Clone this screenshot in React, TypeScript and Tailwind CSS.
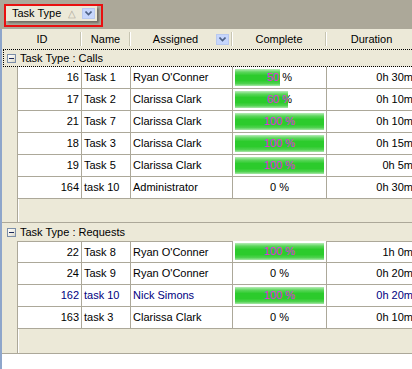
import React from "react";

type Row = { id: number; name: string; who: string; pct: number; dur: string; navy?: boolean };

const calls: Row[] = [
  { id: 16, name: "Task 1", who: "Ryan O'Conner", pct: 50, dur: "0h 30m" },
  { id: 17, name: "Task 2", who: "Clarissa Clark", pct: 60, dur: "0h 10m" },
  { id: 21, name: "Task 7", who: "Clarissa Clark", pct: 100, dur: "0h 10m" },
  { id: 18, name: "Task 3", who: "Clarissa Clark", pct: 100, dur: "0h 15m" },
  { id: 19, name: "Task 5", who: "Clarissa Clark", pct: 100, dur: "0h 5m" },
  { id: 164, name: "task 10", who: "Administrator", pct: 0, dur: "0h 30m" },
];

const requests: Row[] = [
  { id: 22, name: "Task 8", who: "Ryan O'Conner", pct: 100, dur: "1h 0m" },
  { id: 24, name: "Task 9", who: "Ryan O'Conner", pct: 0, dur: "0h 20m" },
  { id: 162, name: "task 10", who: "Nick Simons", pct: 100, dur: "0h 20m", navy: true },
  { id: 163, name: "task 3", who: "Clarissa Clark", pct: 0, dur: "0h 10m" },
];

function DropBtn() {
  return (
    <div className="flex h-[11px] w-[13px] items-center justify-center border border-[#b9c9ef] bg-[#c6d6fc]">
      <svg width="7" height="5" viewBox="0 0 7 5">
        <path d="M0.5 0.5 L3.5 3.5 L6.5 0.5" fill="none" stroke="#4d6185" strokeWidth="1.6" />
      </svg>
    </div>
  );
}

function Sep() {
  return <div className="h-[14px] w-[2px] shrink-0 self-center border-l border-r border-l-[#c7c5b2] border-r-white" />;
}

function MinusBox() {
  return (
    <div className="flex h-[9px] w-[9px] shrink-0 items-center justify-center border border-[#7b8ea8] bg-[linear-gradient(135deg,#ffffff_0%,#f0efe8_50%,#d6d2c2_100%)]">
      <div className="h-[1px] w-[5px] bg-[#1c2a5a]" />
    </div>
  );
}

function Complete({ pct }: { pct: number }) {
  const barW = Math.round((89 * pct) / 100);
  return (
    <div className="relative h-full w-[94px] shrink-0 border-r border-b border-[#aca899] bg-white">
      <div className="absolute inset-0 flex items-center justify-center text-black">{pct} %</div>
      {pct > 0 && (
        <div
          className="absolute left-[2px] top-[2px] h-[17px] overflow-hidden bg-[linear-gradient(to_bottom,#b8ecb8_0%,#5cd65c_18%,#2ccb2c_38%,#2ccb2c_68%,#4fd24f_86%,#a9e6a9_100%)]"
          style={{ width: barW }}
        >
          <div className="absolute left-[-2px] top-[-2px] flex h-[21px] w-[93px] items-center justify-center text-[#e81ee8]">
            {pct} %
          </div>
        </div>
      )}
    </div>
  );
}

function DataRow({ r, top }: { r: Row; top?: boolean }) {
  const color = r.navy ? "text-[#000080]" : "text-black";
  const tb = top ? "border-t" : "";
  return (
    <div className={`flex h-[22px] ${color}`}>
      <div className="w-[15px] shrink-0 bg-[#ece9d8]" />
      <div className={`flex w-[65px] shrink-0 items-center justify-end border-l border-r border-b border-[#aca899] bg-white pr-[2px] ${tb}`}>
        {r.id}
      </div>
      <div className={`flex w-[49px] shrink-0 items-center border-r border-b border-[#aca899] bg-white pl-[2px] ${tb}`}>
        {r.name}
      </div>
      <div className={`flex w-[102px] shrink-0 items-center border-r border-b border-[#aca899] bg-white pl-[2px] ${tb}`}>
        {r.who}
      </div>
      <Complete pct={r.pct} />
      <div className={`flex w-[88px] shrink-0 items-center justify-end border-b border-[#aca899] bg-white pr-[2px] ${tb}`}>
        {r.dur}
      </div>
    </div>
  );
}

function Footer({ h }: { h: "a" | "b" }) {
  return (
    <div className={`flex border-b border-[#aca899] ${h === "a" ? "h-[24px]" : "h-[25px]"}`}>
      <div className="w-[15px] shrink-0" />
      <div className="flex-1 border-l border-[#aca899] shadow-[inset_1px_0_0_#ffffff]" />
    </div>
  );
}

export default function App() {
  return (
    <div className="h-[369px] w-[412px] overflow-hidden bg-white font-['Liberation_Sans',Arial,sans-serif] text-[11px] leading-none text-black">
      {/* group-by area */}
      <div className="h-[29px] bg-[#aca899] pl-[4px] pt-[4px]">
        <div className="h-[23px] w-[99px] border-2 border-[#e81010] bg-[#aca899]">
          <div className="flex h-[15px] w-[91px] items-center bg-[#ece9d8] pl-[6px] shadow-[2px_2px_2px_rgba(0,0,0,0.35)]">
            <span>Task Type</span>
            <span className="ml-[7px] text-[10px] text-[#aca899]">△</span>
            <div className="ml-[6px]">
              <DropBtn />
            </div>
          </div>
        </div>
      </div>

      <div className="h-[340px] w-[414px] border-l-2 border-[#8ea6cb]">
        {/* header */}
        <div className="flex h-[20px] bg-[#ece9d8]">
          <div className="flex w-[80px] shrink-0">
            <div className="flex flex-1 items-center justify-center pl-[2px]">ID</div>
            <Sep />
          </div>
          <div className="flex w-[49px] shrink-0">
            <div className="flex flex-1 items-center justify-center">Name</div>
            <Sep />
          </div>
          <div className="flex w-[102px] shrink-0">
            <div className="flex flex-1 items-center justify-center pl-[4px]">Assigned</div>
            <div className="mr-[2px] self-center">
              <DropBtn />
            </div>
            <Sep />
          </div>
          <div className="flex w-[94px] shrink-0">
            <div className="flex flex-1 items-center justify-center">Complete</div>
            <Sep />
          </div>
          <div className="flex w-[89px] shrink-0 items-center justify-center">Duration</div>
        </div>

        <div className="bg-[#ece9d8]">
          {/* group 1 */}
          <div className="ml-[1px] flex h-[18px] items-center border border-dotted border-black pl-[3px]">
            <MinusBox />
            <span className="ml-[4px]">Task Type : Calls</span>
          </div>
          {calls.map((r) => (
            <DataRow key={r.id} r={r} />
          ))}
          <Footer h="a" />

          {/* group 2 */}
          <div className="ml-[1px] flex h-[18px] items-center pl-[4px]">
            <MinusBox />
            <span className="ml-[4px]">Task Type : Requests</span>
          </div>
          {requests.map((r, i) => (
            <DataRow key={r.id} r={r} top={i === 0} />
          ))}
          <Footer h="b" />
        </div>
        <div className="h-[20px] bg-white" />
      </div>
    </div>
  );
}
